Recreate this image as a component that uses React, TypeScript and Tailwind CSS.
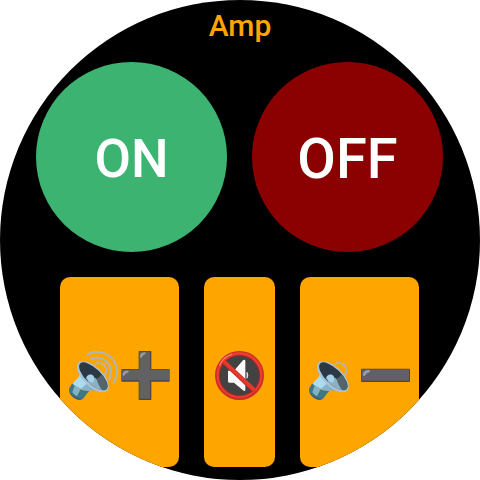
type SpeakerProps = { waves: number };

const WAVES = [
  'M79 39 A22 22 0 0 1 107 72',
  'M66 24 A43 43 0 0 1 121 84',
  'M55 11 A59 59 0 0 1 133 96',
];

function Speaker({ waves }: SpeakerProps) {
  return (
    <svg viewBox="0 0 147 147" className="size-[49px] shrink-0" aria-hidden="true">
      {WAVES.slice(0, waves).map((d) => (
        <path key={d} d={d} fill="none" stroke="#b2b6b2" strokeWidth="6" strokeLinecap="round" />
      ))}
      <path d="M26 40 C30 58 34 70 27 80 L9 99 L56 126 L66 118 C80 117 95 122 112 120 Z" fill="#86b2c6" />
      <path d="M28 44 C33 62 35 72 27 80 L9 99 L36 113 L57 95 Z" fill="#a9dcee" />
      <path d="M10 97 C20 111 40 121 60 120 L42 143 C37 148 29 147 22 144 C11 138 2 129 0 119 C-1 111 5 105 10 97 Z" fill="#417687" />
      <path d="M18 103 C24 108 29 111 35 114 L24 135 C18 132 13 128 10 123 Z" fill="#83b3c5" />
      <path d="M1 121 C8 134 21 142 38 143 C32 148 24 147 16 141 C8 136 2 129 1 121 Z" fill="#2f5f6e" />
      <g transform="rotate(44 71 78)">
        <ellipse cx="71" cy="77" rx="60" ry="29" fill="#a9c4da" />
        <ellipse cx="71" cy="75" rx="55" ry="23" fill="#2c3843" />
        <path d="M80 98 L86 54 C113 58 126 67 126 75 C126 86 105 97 80 98 Z" fill="#53656b" />
        <path d="M66 80 L82 74 C94 80 110 86 118 87 C108 96 88 99 68 98 Z" fill="#8cb0c2" />
      </g>
      <path d="M52 84 C50 70 68 66 74 75 C77 82 76 90 70 96 Z" fill="#a6d3e6" />
    </svg>
  );
}

function Plus() {
  return (
    <svg viewBox="0 0 147 147" className="size-[49px] shrink-0" aria-hidden="true">
      <path d="M55 0 H89 Q91 0 91 2 V54 H144 Q146 54 146 56 V90 Q146 92 144 92 H91 V145 Q91 147 89 147 H55 Q53 147 53 145 V92 H3 Q1 92 1 90 V56 Q1 54 3 54 H53 V2 Q53 0 55 0 Z" fill="#48474c" />
      <path d="M55 2 H87 V56 H144 V88 H87 V143 H55 V88 H3 V56 H55 Z" fill="#626063" />
      <path d="M58 18 Q57 5 72 5 Q76 6 71 9 Q63 12 62 18 Q60 22 58 18 Z" fill="#a09fa1" stroke="#a09fa1" strokeWidth="2" />
      <path d="M6 72 Q5 60 20 60 Q26 61 20 64 Q13 66 10 72 Q8 76 6 72 Z" fill="#a09fa1" stroke="#a09fa1" strokeWidth="2" />
    </svg>
  );
}

function Minus() {
  return (
    <svg viewBox="0 0 147 147" className="size-[49px] shrink-0" aria-hidden="true">
      <rect x="0" y="53" width="147" height="40" rx="3" fill="#48474c" />
      <rect x="2" y="55" width="142" height="34" rx="2" fill="#626063" />
      <path d="M7 73 Q6 59 22 58 Q31 59 24 63 Q15 65 12 72 Q9 78 7 73 Z" fill="#a09fa1" stroke="#a09fa1" strokeWidth="2" />
    </svg>
  );
}

function Muted() {
  return (
    <svg viewBox="0 0 147 147" className="size-[49px] shrink-0" aria-hidden="true">
      <circle cx="73.5" cy="73.5" r="73.5" fill="#c62f2c" />
      <circle cx="73.5" cy="72" r="69" fill="#ec3b2f" />
      <circle cx="73.5" cy="73.5" r="62" fill="#9c2a28" />
      <circle cx="73.5" cy="74" r="59" fill="#424242" />
      <path d="M39 59 H57 L84 28 Q91 24 91 31 V116 Q91 123 84 118 L57 95 H43 Q39 95 39 91 Z" fill="#fafafa" />
      <path d="M96 64 Q101 73 96 82 Z" fill="#fafafa" stroke="#fafafa" strokeWidth="2" />
      <path d="M25 31 L119 120" stroke="#b92c29" strokeWidth="14" />
      <path d="M25 30 L120 119" stroke="#e5392f" strokeWidth="11" />
      <path d="M14 42 Q25 18 50 10" fill="none" stroke="#ff7a65" strokeWidth="4" strokeLinecap="round" />
    </svg>
  );
}

const PANEL = 'flex min-w-0 items-center justify-center gap-[3px] rounded-[10px] bg-[#ffa500] pt-[7px]';

export default function App() {
  return (
    <main className="flex aspect-square w-full flex-col overflow-hidden rounded-full bg-black pb-[13px] font-['Roboto',sans-serif] font-medium">
      <h1 className="h-[62px] shrink-0 pt-2 text-center text-[30px] leading-9 font-medium text-[#ffa500]">Amp</h1>
      <div className="flex min-h-0 flex-1 flex-col gap-[25px]">
        <div className="grid min-h-0 flex-1 grid-cols-2 gap-[25px] pr-[37px] pl-9 text-white">
          <button type="button" className="rounded-[50%] bg-[#3cb371] pt-1.5 text-[53px]">ON</button>
          <button type="button" className="rounded-[50%] bg-[#8b0000] pt-1 text-[56px]">OFF</button>
        </div>
        <div className="grid min-h-0 flex-1 grid-cols-[5fr_3fr_5fr] gap-[25px] pr-[61px] pl-[60px]">
          <button type="button" aria-label="Volume up" className={PANEL}>
            <Speaker waves={3} />
            <Plus />
          </button>
          <button type="button" aria-label="Mute" className={PANEL}>
            <Muted />
          </button>
          <button type="button" aria-label="Volume down" className={PANEL}>
            <Speaker waves={1} />
            <Minus />
          </button>
        </div>
      </div>
    </main>
  );
}
